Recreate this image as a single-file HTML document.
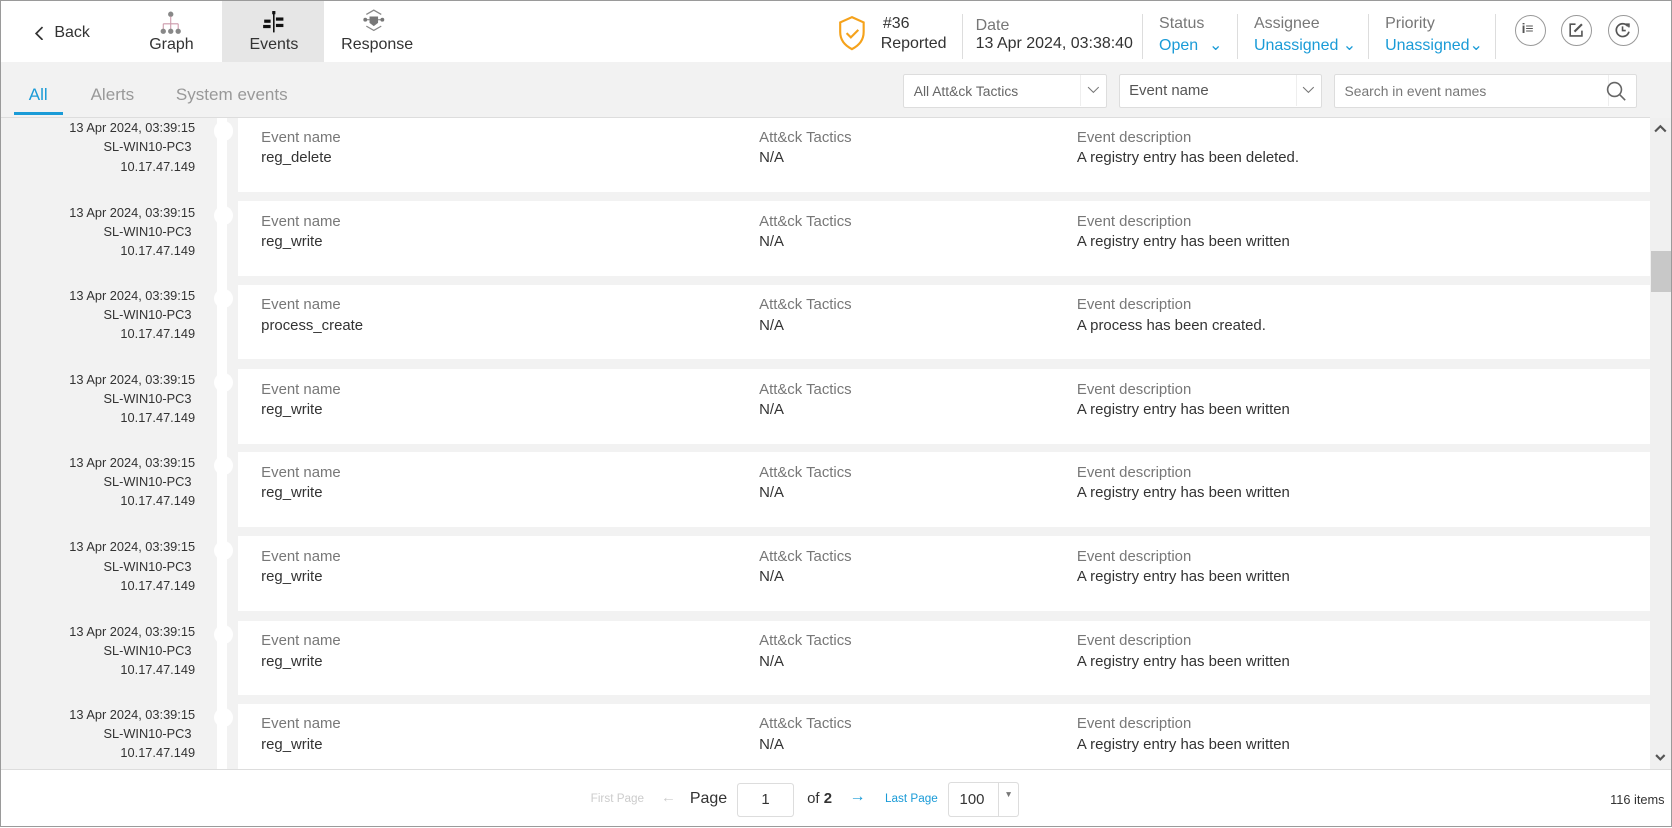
<!DOCTYPE html>
<html><head><meta charset="utf-8">
<style>
*{box-sizing:border-box;margin:0;padding:0}
html,body{width:1672px;height:828px;overflow:hidden;background:#fff}
#w{width:1568px;height:776px;zoom:1.06633;position:relative;font-family:"Liberation Sans",sans-serif;color:#333;border:1px solid #9a9a9a;background:#f2f2f2;overflow:hidden}
.a{position:absolute}
.hdr{left:0;top:0;width:1566px;height:57px;background:#fff}
.t{font-size:14px;white-space:nowrap}
.lbl{color:#777}
.blue{color:#1a9bd7}
.div{width:1px;height:42px;background:#ddd;top:12px}
.circ{width:29px;height:29px;border:1px solid #999;border-radius:50%;top:13px}
.sel{height:32px;background:#fff;border:1px solid #ddd;border-radius:2px;top:68px}
.card{left:222px;width:1324px;height:70px;background:#fff}
.card .t{position:absolute}
.left{left:0;width:182px;text-align:right;font-size:12px;line-height:18px;color:#333}
.dot{left:200px;width:18px;height:18px;border-radius:50%;background:#fff}
</style></head><body><div id="w">
<div class="a hdr"></div>
<svg class="a" style="left:31px;top:23px" width="10" height="14"><path d="M8 1L2 7l6 6" stroke="#333" stroke-width="1.6" fill="none"/></svg>
<div class="a t" style="left:50px;top:22px;font-size:15px">Back</div>
<svg class="a" style="left:148px;top:9px" width="22" height="22"><circle cx="11" cy="3" r="2.5" fill="#888"/><path d="M11 5v7M4 12h14M4 12v5M11 12v5M18 12v5" stroke="#c9a" stroke-width="1"/><circle cx="4" cy="19" r="2.5" fill="#888"/><circle cx="11" cy="19" r="2.5" fill="#888"/><circle cx="18" cy="19" r="2.5" fill="#888"/></svg>
<div class="a t" style="left:139px;top:33px;font-size:15px">Graph</div>
<div class="a" style="left:207px;top:0;width:96px;height:57px;background:#e6e6e6"></div>
<svg class="a" style="left:244px;top:8px" width="24" height="22"><path d="M12 1v20" stroke="#111" stroke-width="1.5"/><rect x="10.5" y="1" width="3" height="3" fill="#111"/><rect x="3" y="9" width="6" height="3" fill="#111"/><rect x="14" y="7" width="7" height="3" fill="#111"/><rect x="2" y="14" width="7" height="3" fill="#111"/><rect x="14" y="13" width="7" height="3" fill="#111"/></svg>
<div class="a t" style="left:233px;top:33px;font-size:15px">Events</div>
<svg class="a" style="left:338px;top:7px" width="24" height="24"><path d="M5 6L12 2l7 4M5 17l7 4 7-4" stroke="#888" stroke-width="1.2" fill="none"/><path d="M8 8h8v6l-4 3-4-3z" fill="#777"/><circle cx="4" cy="11" r="1.8" fill="#777"/><circle cx="20" cy="11" r="1.8" fill="#777"/><path d="M4 11h4M16 11h4" stroke="#777"/></svg>
<div class="a t" style="left:319px;top:33px;font-size:15px">Response</div>
<svg class="a" style="left:784px;top:13px" width="28" height="34"><path d="M14 2l11 5v9c0 8-5 13-11 16C8 29 3 24 3 16V7z" stroke="#f5a21b" stroke-width="2" fill="none"/><path d="M9 17l4 4 7-7" stroke="#f5a21b" stroke-width="2" fill="none"/></svg>
<div class="a t" style="left:827px;top:13px;font-size:15px">#36</div>
<div class="a t" style="left:825px;top:32px;font-size:15px">Reported</div>
<div class="a div" style="left:901px"></div>
<div class="a t lbl" style="left:914px;top:15px;font-size:15px">Date</div>
<div class="a t" style="left:914px;top:32px;font-size:15px">13 Apr 2024, 03:38:40</div>
<div class="a div" style="left:1070px"></div>
<div class="a t lbl" style="left:1086px;top:13px;font-size:15px">Status</div>
<div class="a t blue" style="left:1086px;top:32px;font-size:15px">Open <span style="margin-left:6px">&#8964;</span></div>
<div class="a div" style="left:1159px"></div>
<div class="a t lbl" style="left:1175px;top:13px;font-size:15px">Assignee</div>
<div class="a t blue" style="left:1175px;top:32px;font-size:15px">Unassigned &#8964;</div>
<div class="a div" style="left:1282px"></div>
<div class="a t lbl" style="left:1298px;top:13px;font-size:15px">Priority</div>
<div class="a t blue" style="left:1298px;top:32px;font-size:15px">Unassigned&#8964;</div>
<div class="a div" style="left:1401px"></div>
<div class="a circ" style="left:1420px"></div>
<div class="a t" style="left:1426px;top:18px;font-size:13px;font-weight:bold;color:#555">i&#8801;</div>
<div class="a circ" style="left:1463px"></div>
<svg class="a" style="left:1469px;top:19px" width="17" height="17"><path d="M8 3H3v11h11V9" stroke="#555" stroke-width="1.5" fill="none"/><path d="M7 10l7-7" stroke="#555" stroke-width="2"/></svg>
<div class="a circ" style="left:1507px"></div>
<svg class="a" style="left:1513px;top:19px" width="17" height="17"><path d="M13 5A6 6 0 1 0 14 10" stroke="#555" stroke-width="1.6" fill="none"/><path d="M8 5v4h3" stroke="#555" stroke-width="1.5" fill="none"/><path d="M11 3h3v3" stroke="#555" stroke-width="1.5" fill="none"/></svg>
<div class="a t blue" style="left:26px;top:79px;font-size:16px">All</div>
<div class="a" style="left:12px;top:104px;width:46px;height:3px;background:#1a9bd7"></div>
<div class="a t" style="left:84px;top:79px;font-size:16px;color:#999">Alerts</div>
<div class="a t" style="left:164px;top:79px;font-size:16px;color:#999">System events</div>
<div class="a sel" style="left:846px;width:191px"><span class="a t" style="left:9px;top:8px;font-size:13px;color:#666">All Att&amp;ck Tactics</span><span class="a" style="right:0;top:0;width:24px;height:30px;border-left:1px solid #eee"></span><svg class="a" style="right:6px;top:11px" width="12" height="8"><path d="M1 1l5 5 5-5" stroke="#777" fill="none"/></svg></div>
<div class="a sel" style="left:1048px;width:191px"><span class="a t" style="left:9px;top:7px;font-size:14px;color:#555">Event name</span><span class="a" style="right:0;top:0;width:24px;height:30px;border-left:1px solid #eee"></span><svg class="a" style="right:6px;top:11px" width="12" height="8"><path d="M1 1l5 5 5-5" stroke="#777" fill="none"/></svg></div>
<div class="a sel" style="left:1250px;width:284px"><span class="a t" style="left:9px;top:8px;font-size:13px;color:#777">Search in event names</span><span class="a" style="right:0;top:0;width:26px;height:30px;border-left:1px solid #eee"></span><svg class="a" style="right:8px;top:6px" width="20" height="20"><circle cx="8" cy="8" r="6.5" stroke="#666" stroke-width="1.5" fill="none"/><path d="M13 13l5 5" stroke="#666" stroke-width="1.5"/></svg></div>
<div class="a" style="left:0;top:109px;width:1546px;height:1px;background:#ddd"></div>
<div class="a" style="left:0;top:110px;width:1546px;height:610px;overflow:hidden">
<div class="a" style="left:203px;top:0;width:9px;height:610px;background:#fff"></div>
<div id="rows"></div>
</div>
<div class="a" style="left:1546px;top:110px;width:20px;height:610px;background:#f0f0f0"></div>
<svg class="a" style="left:1550px;top:114px" width="12" height="10"><path d="M1 8l5-5 5 5" stroke="#555" stroke-width="2" fill="none"/></svg>
<div class="a" style="left:1547px;top:234px;width:19px;height:39px;background:#c8c8c8"></div>
<svg class="a" style="left:1551px;top:706px" width="10" height="8"><path d="M1 1l4 4 4-4" stroke="#555" stroke-width="2" fill="none"/></svg>
<div class="a" style="left:0;top:720px;width:1566px;height:55px;background:#fff;border-top:1px solid #ddd"></div>
<div class="a t" style="left:553px;top:742px;font-size:11px;color:#ccc">First Page</div>
<div class="a t" style="left:619px;top:739px;font-size:14px;color:#ccc">&#8592;</div>
<div class="a t" style="left:646px;top:740px;font-size:15px">Page</div>
<div class="a" style="left:690px;top:733px;width:54px;height:32px;border:1px solid #ddd;border-radius:3px;text-align:center;font-size:14px;line-height:30px">1</div>
<div class="a t" style="left:756px;top:740px;font-size:14px">of <b>2</b></div>
<div class="a t blue" style="left:796px;top:738px;font-size:15px">&#8594;</div>
<div class="a t blue" style="left:829px;top:742px;font-size:11px">Last Page</div>
<div class="a" style="left:888px;top:732px;width:67px;height:33px;border:1px solid #ddd;border-radius:3px"><span class="a t" style="left:10px;top:8px">100</span><span class="a" style="left:46px;top:0;height:31px;border-left:1px solid #ddd"></span><span class="a" style="left:52px;top:6px;font-size:8px;color:#777">&#9660;</span></div>
<div class="a t" style="left:1509px;top:742px;font-size:12px">116 items</div>
</div>
<script>
var d=[["reg_delete","A registry entry has been deleted."],["reg_write","A registry entry has been written"],["process_create","A process has been created."],["reg_write","A registry entry has been written"],["reg_write","A registry entry has been written"],["reg_write","A registry entry has been written"],["reg_write","A registry entry has been written"],["reg_write","A registry entry has been written"]];
var h="";
d.forEach(function(r,i){var y=Math.round(i*78.6)-1;
h+='<div class="a left" style="top:'+(y+1)+'px">13 Apr 2024, 03:39:15<br>SL-WIN10-PC3&nbsp;<br>10.17.47.149</div>';
h+='<div class="a dot" style="top:'+(y+4)+'px"></div>';
h+='<div class="a card" style="top:'+y+'px"><span class="t lbl" style="left:22px;top:11px">Event name</span><span class="t" style="left:22px;top:30px">'+r[0]+'</span><span class="t lbl" style="left:489px;top:11px">Att&amp;ck Tactics</span><span class="t" style="left:489px;top:30px">N/A</span><span class="t lbl" style="left:787px;top:11px">Event description</span><span class="t" style="left:787px;top:30px">'+r[1]+'</span></div>';});
document.getElementById("rows").innerHTML=h;
</script>
</body></html>
